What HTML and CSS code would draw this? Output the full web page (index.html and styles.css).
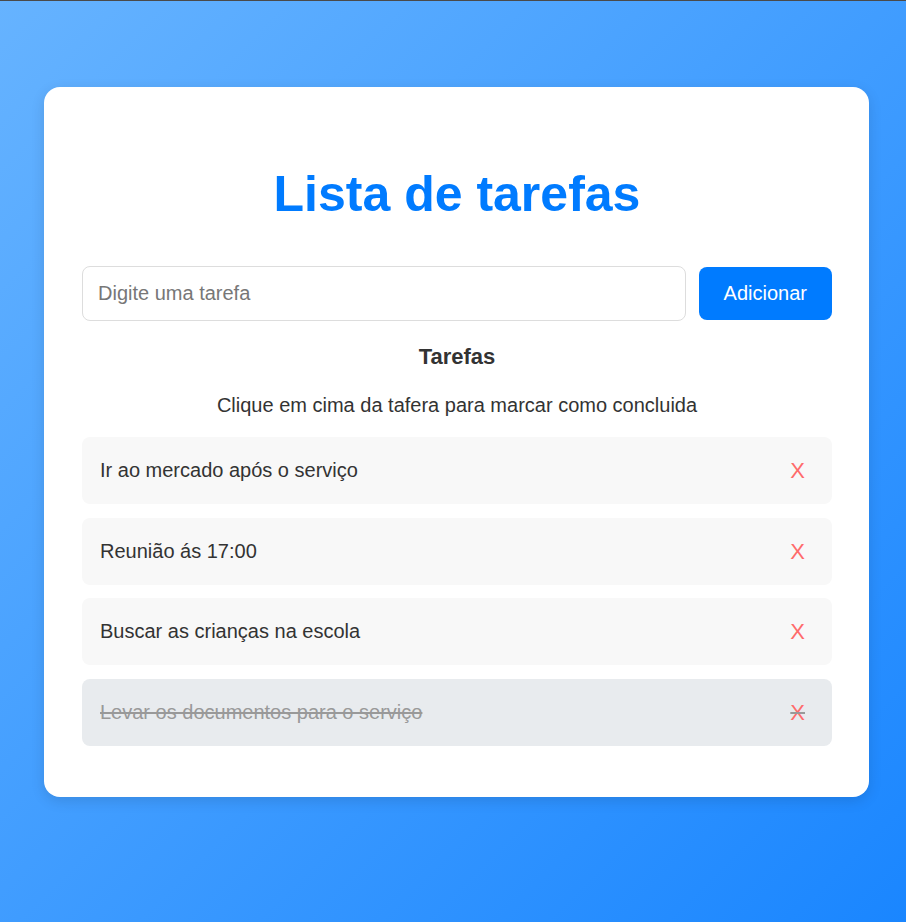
FILE: index.html
```html
<!DOCTYPE html>
<html lang="pt-BR">
<head>
    <meta charset="UTF-8">
    <title>Lista de tarefas</title>
    <link rel="stylesheet" href="styles.css">
</head>
<body>
    <div class="container">
        <h1>Lista de tarefas</h1>
        <form class="task-form" onsubmit="return false">
            <input type="text" placeholder="Digite uma tarefa">
            <button type="submit">Adicionar</button>
        </form>
        <h3>Tarefas</h3>
        <p class="hint">Clique em cima da tafera para marcar como concluida</p>
        <ul class="task-list">
            <li>Ir ao mercado após o serviço <span class="remove">X</span></li>
            <li>Reunião ás 17:00 <span class="remove">X</span></li>
            <li>Buscar as crianças na escola <span class="remove">X</span></li>
            <li class="done">Levar os documentos para o serviço <span class="remove">X</span></li>
        </ul>
    </div>
</body>
</html>
```

FILE: styles.css
```css
html {
    height: 100%;
}

body {
    font-family: 'Liberation Sans', Arial, sans-serif;
    margin: 0;
    padding: 86px 37px 40px 44px;
    min-height: 100%;
    box-sizing: border-box;
    border-top: 1px solid #4a4a4a;
    background: linear-gradient(135deg, #66b3ff 0%, #1a86ff 100%);
    color: #333;
}

.container {
    background: white;
    border-radius: 16px;
    padding: 78px 37px 51px 38px;
    box-shadow: 0 4px 14px rgba(0, 0, 0, 0.12);
}

h1 {
    color: #007bff;
    font-size: 50px;
    line-height: 58px;
    text-align: center;
    margin: 0 0 43px;
}

.task-form {
    display: flex;
    align-items: center;
    gap: 13px;
    margin: 0;
}

.task-form input {
    flex: 1;
    font-family: inherit;
    font-size: 20px;
    line-height: 23px;
    padding: 15px 15px;
    border: 1px solid #ddd;
    border-radius: 8px;
    outline: none;
}

.task-form input::placeholder {
    color: #777;
}

.task-form button {
    font-family: inherit;
    font-size: 20px;
    line-height: 23px;
    padding: 15px 25px;
    background-color: #007bff;
    color: white;
    border: none;
    border-radius: 8px;
    cursor: pointer;
}

h3 {
    font-size: 22px;
    line-height: 25px;
    text-align: center;
    margin: 23px 0 25px;
}

.hint {
    font-size: 20px;
    line-height: 23px;
    text-align: center;
    margin: 0 0 20px;
}

.task-list {
    list-style: none;
    margin: 0;
    padding: 0;
    display: flex;
    flex-direction: column;
    gap: 13.7px;
}

.task-list li {
    display: flex;
    justify-content: space-between;
    align-items: center;
    background-color: #f8f8f8;
    border-radius: 8px;
    padding: 21px 27px 21px 18px;
    font-size: 20px;
    line-height: 25px;
    cursor: pointer;
}

.task-list li.done {
    background-color: #e8ebee;
    color: #999;
    text-decoration: line-through;
}

.remove {
    color: #ff6b6b;
    font-size: 22px;
    line-height: 25px;
}
```
